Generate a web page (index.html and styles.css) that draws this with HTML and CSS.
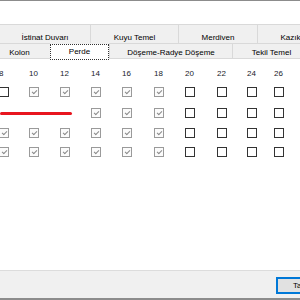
FILE: index.html
```html
<!DOCTYPE html>
<html lang="tr">
<head>
    <meta charset="UTF-8">
    <title>Donatı Çapları</title>
    <link rel="stylesheet" href="styles.css">
</head>
<body>
    <div class="window">
        <div class="blank"></div>

        <div class="tabs">
            <div class="tab-row row1">
                <div class="tab first w91">İstinat Duvarı</div>
                <div class="tab w88">Kuyu Temel</div>
                <div class="tab w79">Merdiven</div>
                <div class="tab w66">Kazık</div>
            </div>
            <div class="tab-row row2">
                <div class="tab first w62">Kolon</div>
                <div class="tab active w59">Perde</div>
                <div class="tab w123">Döşeme-Radye Döşeme</div>
                <div class="tab w78">Tekil Temel</div>
            </div>
        </div>

        <div class="page">
            <div class="grid">
                <span class="num">8</span>
                <span class="num">10</span>
                <span class="num">12</span>
                <span class="num">14</span>
                <span class="num">16</span>
                <span class="num">18</span>
                <span class="num">20</span>
                <span class="num">22</span>
                <span class="num">24</span>
                <span class="num">26</span>

                <span class="cb"></span>
                <span class="cb on"></span>
                <span class="cb on"></span>
                <span class="cb on"></span>
                <span class="cb on"></span>
                <span class="cb on"></span>
                <span class="cb"></span>
                <span class="cb"></span>
                <span class="cb"></span>
                <span class="cb"></span>

                <span class="strike"></span>
                <span class="cb on"></span>
                <span class="cb on"></span>
                <span class="cb on"></span>
                <span class="cb"></span>
                <span class="cb"></span>
                <span class="cb"></span>
                <span class="cb"></span>

                <span class="cb on"></span>
                <span class="cb on"></span>
                <span class="cb on"></span>
                <span class="cb on"></span>
                <span class="cb on"></span>
                <span class="cb on"></span>
                <span class="cb"></span>
                <span class="cb"></span>
                <span class="cb"></span>
                <span class="cb"></span>

                <span class="cb on"></span>
                <span class="cb on"></span>
                <span class="cb on"></span>
                <span class="cb on"></span>
                <span class="cb on"></span>
                <span class="cb on"></span>
                <span class="cb"></span>
                <span class="cb"></span>
                <span class="cb"></span>
                <span class="cb"></span>
            </div>
        </div>

        <div class="footer">
            <button class="btn">Tamam</button>
        </div>
    </div>
</body>
</html>
```

FILE: styles.css
```css
/* Window */
body {
    margin: 0;
    font-family: 'Liberation Sans', Arial, sans-serif;
    font-size: 8px;
    color: #000;
}

.window {
    width: 300px;
    height: 300px;
    display: flex;
    flex-direction: column;
    overflow: hidden;
    background: #fff;
    border-top: 1px solid #8c8c8c;
    box-sizing: border-box;
}

.blank {
    height: 23px;
    flex-shrink: 0;
}

/* Tabs */
.tabs {
    flex-shrink: 0;
}

.tab-row {
    display: flex;
    background: #f0f0f0;
}

.tab {
    flex-shrink: 0;
    box-sizing: border-box;
    border-top: 1px solid #d9d9d9;
    border-left: 1px solid #d9d9d9;
    text-align: center;
    line-height: 10px;
    white-space: nowrap;
}

.row1 .tab {
    height: 19px;
    padding-top: 8px;
}

.row2 {
    height: 15px;
    align-items: flex-start;
}

.row2 .tab {
    height: 15px;
    padding-top: 4px;
}

.row1 .first { margin-left: -1px; }
.row2 .first { margin-left: -12px; }

.row2 .tab.active {
    position: relative;
    height: 16px;
    margin-top: 1px;
    padding-top: 2px;
    background: #fff;
    border: 1px dotted #333;
}

.w59 { width: 59px; }
.w62 { width: 62px; }
.w66 { width: 66px; }
.w78 { width: 78px; }
.w79 { width: 79px; }
.w88 { width: 88px; }
.w91 { width: 91px; }
.w123 { width: 123px; }

/* Page */
.page {
    flex: 1;
    border-top: 1px solid #d9d9d9;
    padding-top: 10px;
}

.grid {
    display: grid;
    grid-template-columns: 30px 31px 31px 31px 32px 31px 32px 30px 27px 26px;
    grid-template-rows: 18px 21px 20px 19px 10px;
    align-items: start;
    margin-left: -1px;
}

.num {
    line-height: 10px;
    color: #1a1a2a;
}

.cb {
    display: block;
    width: 10px;
    height: 10px;
    box-sizing: border-box;
    border: 1px solid #333;
    background: #fff;
}

.cb.on {
    border-color: #9a9a9a;
    background: #fbfbfb;
}

.cb.on::after {
    content: '';
    display: block;
    width: 4px;
    height: 2px;
    margin: 2px 0 0 2px;
    border-left: 1px solid #8a8a8a;
    border-bottom: 1px solid #8a8a8a;
    transform: rotate(-45deg);
}

.strike {
    grid-column: 1 / 4;
    justify-self: start;
    width: 72px;
    height: 3px;
    margin: 4px 0 0 1px;
    background: #e8161f;
    border-radius: 2px;
}

/* Footer */
.footer {
    height: 30px;
    flex-shrink: 0;
    box-sizing: border-box;
    display: flex;
    justify-content: flex-end;
    align-items: flex-start;
    padding-top: 6px;
    background: #f0f0f0;
    border-top: 1px solid #dcdcdc;
    border-bottom: 2px solid #8c8c8c;
}

.btn {
    width: 60px;
    height: 17px;
    margin-right: -36px;
    flex-shrink: 0;
    padding: 0;
    font-family: 'Liberation Sans', Arial, sans-serif;
    font-size: 8px;
    color: #000;
    background: #e1e1e1;
    border: 2px solid #0078d7;
}
```
